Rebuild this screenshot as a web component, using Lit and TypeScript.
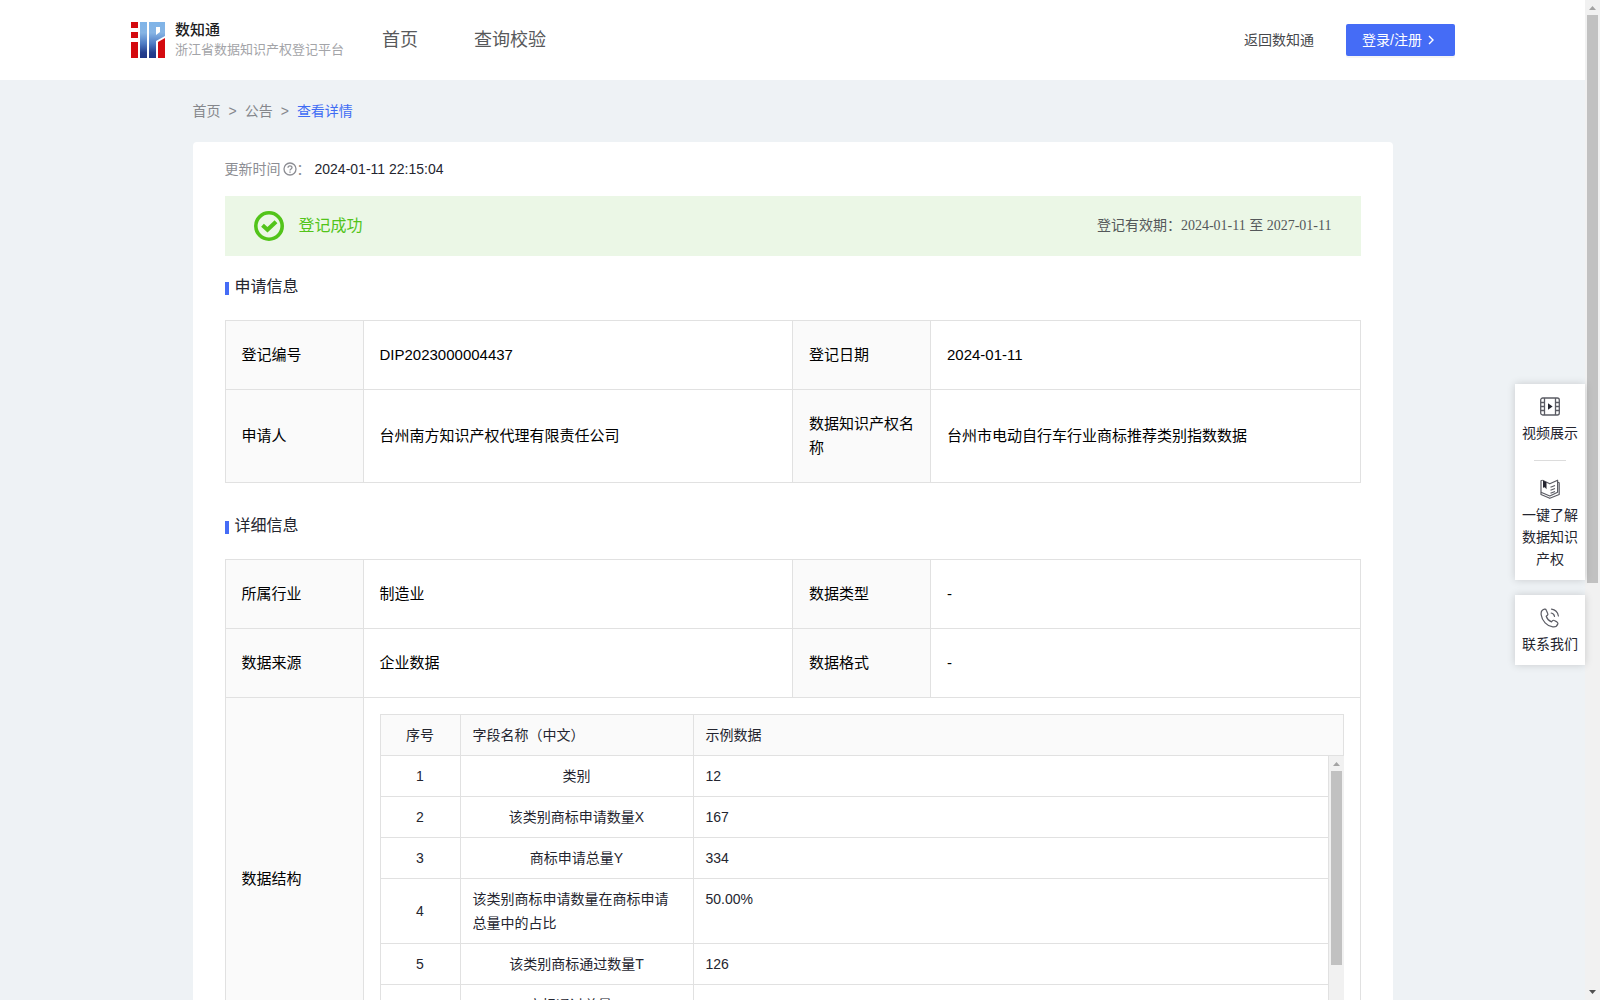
import { LitElement, html, css, svg } from "lit";
import { customElement } from "lit/decorators.js";

interface FieldRow {
  no: number;
  name: string;
  sample: string;
}

const FIELDS: FieldRow[] = [
  { no: 1, name: "类别", sample: "12" },
  { no: 2, name: "该类别商标申请数量X", sample: "167" },
  { no: 3, name: "商标申请总量Y", sample: "334" },
  { no: 4, name: "该类别商标申请数量在商标申请总量中的占比", sample: "50.00%" },
  { no: 5, name: "该类别商标通过数量T", sample: "126" },
  { no: 6, name: "商标通过总量W", sample: "238" },
];

const logoMark = svg`
  <svg class="logo-mark" viewBox="0 0 34 36" width="34" height="36" aria-hidden="true">
    <defs>
      <linearGradient id="blue" gradientUnits="userSpaceOnUse" x1="0" y1="0" x2="0" y2="36">
        <stop offset="0" stop-color="#7fb4e8" />
        <stop offset="0.3" stop-color="#86b4e4" />
        <stop offset="0.6" stop-color="#4f7cc4" />
        <stop offset="0.85" stop-color="#25408f" />
        <stop offset="1" stop-color="#1f3787" />
      </linearGradient>
    </defs>
    <rect x="0" y="0" width="7" height="6" fill="#d40a0f" />
    <rect x="0" y="10" width="7" height="6" fill="#d40a0f" />
    <rect x="0" y="20" width="7" height="16" fill="#d40a0f" />
    <rect x="9" y="0" width="7" height="36" fill="url(#blue)" />
    <path d="M18 0H34V14L25 19V36H18ZM25 5V13L29 10V5Z" fill="url(#blue)" fill-rule="evenodd" />
    <path d="M27 20L34 16V36H27Z" fill="#d40a0f" />
  </svg>`;

@customElement("app-root")
export class AppRoot extends LitElement {
  static styles = css`
    :host {
      display: block;
      font-family: "Liberation Sans", "Noto Sans CJK SC", sans-serif;
      font-size: 14px;
      line-height: 24px;
      color: #24252f;
    }
    * {
      box-sizing: border-box;
    }
    a {
      color: inherit;
      text-decoration: none;
    }
    .shell {
      display: flex;
      height: 100vh;
      overflow: hidden;
      background: #eef2f5;
    }
    .page {
      flex: 1;
      min-width: 0;
      height: 100%;
      overflow: hidden;
    }

    /* scroll bars */
    .scrollbar {
      flex: none;
      width: 15px;
      display: flex;
      flex-direction: column;
      align-items: center;
      background: #f1f1f1;
    }
    .arrow {
      flex: none;
      width: 15px;
      height: 15px;
      display: block;
    }
    .track {
      flex: 1;
      width: 11px;
    }
    .thumb {
      background: #c1c1c1;
    }

    /* header */
    .header {
      display: flex;
      align-items: center;
      height: 80px;
      padding: 0 130px 0 131px;
      background: #fff;
    }
    .brand {
      display: flex;
      align-items: center;
      gap: 10px;
    }
    .logo-mark {
      display: block;
    }
    .brand-text {
      display: flex;
      flex-direction: column;
      line-height: 20px;
      width: 167px;
      white-space: nowrap;
    }
    .brand-name {
      font-size: 15px;
      font-weight: 500;
      color: #1d1d1f;
    }
    .brand-sub {
      font-size: 13px;
      color: #a3a4a8;
    }
    .nav {
      display: flex;
      gap: 56px;
      margin-left: 40px;
      font-size: 18px;
      color: #58595b;
    }
    .header-side {
      display: flex;
      align-items: center;
      gap: 32px;
      margin-left: auto;
      color: #47484c;
    }
    .login {
      display: flex;
      align-items: center;
      gap: 4px;
      height: 32px;
      padding: 0 19px 0 16px;
      border: 0;
      border-radius: 2px;
      background: #456cf6;
      color: #fff;
      font: inherit;
      box-shadow: 0 2px 0 rgba(0, 0, 0, 0.04);
    }

    /* content */
    .content {
      max-width: 1200px;
      margin: 0 auto;
    }
    .crumbs {
      display: flex;
      gap: 8px;
      height: 62px;
      align-items: center;
      color: #85878c;
    }
    .crumbs .current {
      color: #3f6cf4;
    }
    .card {
      padding: 15px 32px 32px;
      border-radius: 4px;
      background: #fff;
    }
    .updated {
      display: flex;
      align-items: center;
      color: #8c8d93;
    }
    .updated time {
      margin-left: 4px;
      color: #24252f;
    }
    .banner {
      display: flex;
      align-items: center;
      height: 60px;
      margin-top: 15px;
      padding: 0 29px;
      background: #ebf7e6;
    }
    .banner-state {
      margin-left: 15px;
      font-size: 16px;
      color: #52c41a;
    }
    .validity {
      margin-left: auto;
      font-family: "Liberation Serif", "Noto Sans CJK SC", serif;
      color: #54585a;
    }
    .section-title {
      display: flex;
      align-items: center;
      gap: 6px;
      height: 24px;
      margin: 19px 0 21px;
      font-size: 16px;
      font-weight: 400;
      color: #24252f;
    }
    .section-title::before {
      content: "";
      width: 4px;
      height: 13px;
      margin-top: 3px;
      background: #456cf6;
    }
    .info + .section-title {
      margin-top: 31px;
    }

    .info {
      width: 100%;
      table-layout: fixed;
      border-collapse: collapse;
      font-size: 15px;
      color: #000;
    }
    .info .label-col {
      width: 138px;
    }
    .info > tbody > tr > th,
    .info > tbody > tr > td {
      padding: 22px 16px;
      border: 1px solid #e1e1e1;
      font-weight: 400;
      text-align: left;
      vertical-align: middle;
    }
    .info > tbody > tr > th {
      background: #fafafa;
    }
    .info > tbody > tr > td.nested {
      padding: 16px;
    }

    /* data structure grid */
    .fields {
      width: 100%;
      table-layout: fixed;
      border-collapse: separate;
      border-spacing: 0;
      font-size: 14px;
      color: #24252f;
      border-left: 1px solid #e1e1e1;
    }
    .fields .no {
      width: 80px;
      text-align: center;
      vertical-align: middle;
    }
    .fields .name {
      width: 233px;
    }
    .fields th,
    .fields td {
      padding: 8px 12px;
      border-right: 1px solid #e1e1e1;
      border-bottom: 1px solid #e1e1e1;
      font-weight: 400;
      text-align: left;
      vertical-align: top;
    }
    .fields-head {
      border-top: 1px solid #e1e1e1;
      background: #fafafa;
    }
    .fields td.name {
      text-align: center;
    }
    .fields td.name span {
      display: inline-block;
      text-align: left;
    }
    .fields-scroll {
      display: flex;
      height: 288px;
    }
    .fields-view {
      flex: 1;
      min-width: 0;
      overflow: hidden;
    }

    /* floating tools */
    .tools {
      position: absolute;
      top: 384px;
      right: 15px;
      width: 70px;
      display: flex;
      flex-direction: column;
      gap: 15px;
      line-height: 22px;
      text-align: center;
    }
    .tool-box {
      display: flex;
      flex-direction: column;
      align-items: center;
      padding: 13px 7px 10px;
      background: #fff;
      box-shadow: 0 0 8px rgba(0, 0, 0, 0.16);
    }
    .tool {
      display: flex;
      flex-direction: column;
      align-items: center;
      gap: 5px;
    }
    .tool svg {
      display: block;
    }
    .tool-line {
      width: 32px;
      height: 1px;
      margin: 16px 0 18px;
      background: #dcdcdc;
    }
  `;

  private arrow(up: boolean, color: string) {
    return html`<svg class="arrow" viewBox="0 0 15 15" aria-hidden="true">
      <path d=${up ? "M4 10L7.500 6L11 10Z" : "M4 5L7.500 9L11 5Z"} fill=${color} />
    </svg>`;
  }

  private scrollbar(thumbShare: number) {
    return html`<div class="scrollbar" aria-hidden="true">
      ${this.arrow(true, "#a3a3a3")}
      <div class="track"><div class="thumb" style="height:${thumbShare}%"></div></div>
      ${this.arrow(false, "#505050")}
    </div>`;
  }

  private header() {
    return html`<header class="header">
      <a class="brand" href="#home">
        ${logoMark}
        <span class="brand-text">
          <span class="brand-name">数知通</span>
          <span class="brand-sub">浙江省数据知识产权登记平台</span>
        </span>
      </a>
      <nav class="nav">
        <a href="#home">首页</a>
        <a href="#query">查询校验</a>
      </nav>
      <div class="header-side">
        <a href="#back">返回数知通</a>
        <button class="login" type="button">
          登录/注册
          <svg width="10" height="10" viewBox="0 0 10 10" aria-hidden="true">
            <path d="M3 1L7 5L3 9" fill="none" stroke="#fff" stroke-width="1.400" />
          </svg>
        </button>
      </div>
    </header>`;
  }

  private fields() {
    return html`
      <table class="fields fields-head">
        <tr>
          <th class="no">序号</th>
          <th class="name">字段名称（中文）</th>
          <th>示例数据</th>
        </tr>
      </table>
      <div class="fields-scroll">
        <div class="fields-view">
          <table class="fields">
            ${FIELDS.map(
              (f) => html`<tr>
                <td class="no">${f.no}</td>
                <td class="name"><span>${f.name}</span></td>
                <td>${f.sample}</td>
              </tr>`
            )}
          </table>
        </div>
        ${this.scrollbar(75)}
      </div>
    `;
  }

  private tools() {
    return html`<aside class="tools">
      <div class="tool-box">
        <a class="tool" href="#video">
          <svg width="20" height="20" viewBox="0 0 20 20" fill="none" stroke="#5b5c64" stroke-width="1.300">
            <rect x="0.700" y="1" width="18.600" height="17" rx="2" />
            <path d="M4.500 1V18M15.500 1V18M1 5.500H4.500M1 9.500H4.500M1 13.500H4.500M15.500 5.500H19M15.500 9.500H19M15.500 13.500H19" />
            <path d="M8 6.300L12.600 9.500L8 12.700Z" fill="#24252f" stroke="none" />
          </svg>
          <span>视频展示</span>
        </a>
        <span class="tool-line"></span>
        <a class="tool" href="#guide">
          <svg width="20" height="20" viewBox="0 0 20 20" fill="none" stroke="#5b5c64" stroke-width="1.200" stroke-linejoin="round">
            <path d="M2.500 1.200L1 1.800V15.500L9.800 19.300L19.200 15.500V3.800L17.600 3.200" />
            <path d="M2.500 1.200L9.800 4.800L17.600 1.200V13.200L9.800 17L1 13.200" />
            <path d="M10.500 8.300L15 6.500M10.500 11.300L15 9.500M10.500 14.300L15 12.500" />
            <path d="M3 1.500L6.500 3.200V10.200L4.800 8.200L3 8.800Z" fill="#24252f" stroke="none" />
          </svg>
          <span>一键了解数据知识产权</span>
        </a>
      </div>
      <div class="tool-box">
        <a class="tool" href="#contact">
          <svg width="20" height="20" viewBox="0 0 20 20" fill="none" stroke="#5b5c64" stroke-width="1.200" stroke-linecap="round" stroke-linejoin="round">
            <path d="M4.500 1.200C2 1.800 0.800 4 1.200 6.800C2 12.800 7 18.200 12.800 18.900C15.200 19.200 17.200 18 17.900 15.800C18 15 17.600 14.300 16.900 13.900L14.300 12.500C13.600 12.100 12.800 12.300 12.300 12.900L11.500 13.900C9.200 13 7 10.700 6.200 8.300L7.400 7.300C7.900 6.800 8 6.100 7.700 5.500L6.300 2.200C6 1.400 5.300 1 4.500 1.200Z" />
            <path d="M11.200 5C13 5.300 14.200 6.500 14.500 8.300M11.500 1.200C15.200 1.700 17.700 4.200 18.400 8" />
          </svg>
          <span>联系我们</span>
        </a>
      </div>
    </aside>`;
  }

  render() {
    return html`<div class="shell">
      <div class="page">
        ${this.header()}
        <main class="content">
          <nav class="crumbs">
            <a href="#home">首页</a><span>&gt;</span><a href="#notice">公告</a><span>&gt;</span>
            <a class="current" href="#detail">查看详情</a>
          </nav>
          <article class="card">
            <div class="updated">
              <span>更新时间</span>
              <svg width="16" height="16" viewBox="0 0 16 16" fill="none" stroke="#8c8d93" stroke-width="1.300" aria-hidden="true">
                <circle cx="9" cy="8" r="6" />
                <path d="M7 6.700C7 4.200 11 4.200 11 6.600C11 8 9 7.900 9 9.600M9 10.600V11.700" />
              </svg>
              <span>：</span>
              <time>2024-01-11 22:15:04</time>
            </div>
            <div class="banner">
              <svg width="30" height="30" viewBox="0 0 30 30" fill="none" stroke="#52c41a" aria-hidden="true">
                <circle cx="15" cy="15" r="13.200" stroke-width="3.600" />
                <path d="M8.500 14.200L13.500 18.800L22 10.700" stroke-width="4" />
              </svg>
              <span class="banner-state">登记成功</span>
              <span class="validity">登记有效期：2024-01-11 至 2027-01-11</span>
            </div>

            <h2 class="section-title">申请信息</h2>
            <table class="info">
              <colgroup>
                <col class="label-col" />
                <col />
                <col class="label-col" />
                <col />
              </colgroup>
              <tbody>
                <tr>
                  <th>登记编号</th>
                  <td>DIP2023000004437</td>
                  <th>登记日期</th>
                  <td>2024-01-11</td>
                </tr>
                <tr>
                  <th>申请人</th>
                  <td>台州南方知识产权代理有限责任公司</td>
                  <th>数据知识产权名称</th>
                  <td>台州市电动自行车行业商标推荐类别指数数据</td>
                </tr>
              </tbody>
            </table>

            <h2 class="section-title">详细信息</h2>
            <table class="info">
              <colgroup>
                <col class="label-col" />
                <col />
                <col class="label-col" />
                <col />
              </colgroup>
              <tbody>
                <tr>
                  <th>所属行业</th>
                  <td>制造业</td>
                  <th>数据类型</th>
                  <td>-</td>
                </tr>
                <tr>
                  <th>数据来源</th>
                  <td>企业数据</td>
                  <th>数据格式</th>
                  <td>-</td>
                </tr>
                <tr>
                  <th>数据结构</th>
                  <td class="nested" colspan="3">${this.fields()}</td>
                </tr>
              </tbody>
            </table>
          </article>
        </main>
      </div>
      ${this.scrollbar(58.6)} ${this.tools()}
    </div>`;
  }
}
